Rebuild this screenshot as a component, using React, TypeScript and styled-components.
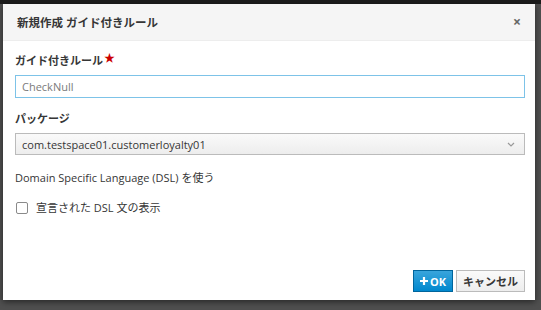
import React from 'react'
import styled, { createGlobalStyle } from 'styled-components'

const GlobalStyle = createGlobalStyle`
  html, body { margin: 0; padding: 0; }
  body {
    width: 541px;
    height: 310px;
    overflow: hidden;
    background: linear-gradient(to bottom, #1c1c1c 0, #1c1c1c 4px, #4f4f4f 4px);
    font-family: "Open Sans", "Noto Sans CJK JP", sans-serif;
  }
`

const Backdrop = styled.div`
  padding: 4px 6px 0 3px;
`

const Dialog = styled.div`
  width: 532px;
  height: 296px;
  background: #fff;
  box-shadow: 0 2px 6px rgba(0, 0, 0, 0.5);
  display: flex;
  flex-direction: column;
`

const Header = styled.div`
  height: 37px;
  box-sizing: border-box;
  background: #f5f5f5;
  border-bottom: 1px solid #ededed;
  display: flex;
  align-items: center;
  justify-content: space-between;
  padding: 0 14px 0 14px;
`

const Title = styled.h4`
  margin: 0;
  font-size: 11.5px;
  font-weight: 700;
  color: #363636;
`

const Close = styled.span`
  font-size: 14px;
  color: #666;
  font-weight: 700;
  line-height: 1;
`

const Body = styled.div`
  flex: 1;
  padding: 9px 10px 0 12px;
  display: flex;
  flex-direction: column;
`

const Label = styled.label`
  display: block;
  font-size: 11px;
  font-weight: 600;
  color: #363636;
  line-height: 16px;
  margin-bottom: 6px;
`

const Star = styled.span`
  color: #c00;
  font-size: 11px;
  margin-left: 1px;
  vertical-align: 3px;
`

const TextInput = styled.input`
  display: block;
  width: 100%;
  box-sizing: border-box;
  height: 23px;
  border: 1px solid #7dc3e8;
  padding: 0 6px;
  font-family: inherit;
  font-size: 11px;
  color: #7a7a7a;
  outline: none;
  margin-bottom: 13px;
`

const Select = styled.div`
  height: 22px;
  box-sizing: border-box;
  border: 1px solid #bbb;
  background: linear-gradient(to bottom, #fafafa, #ededed);
  display: flex;
  align-items: center;
  justify-content: space-between;
  padding: 0 9px 0 6px;
  font-size: 11px;
  color: #363636;
  margin-bottom: 15px;
`

const Plain = styled.div`
  font-size: 11px;
  color: #363636;
  line-height: 16px;
  margin-bottom: 14px;
`

const CheckRow = styled.label`
  display: flex;
  align-items: center;
  gap: 8px;
  font-size: 11px;
  line-height: 16px;
  color: #363636;
  padding-left: 1px;
`

const Box = styled.span`
  width: 10px;
  height: 10px;
  border: 1px solid #8a8a8a;
  border-radius: 2px;
  background: #fff;
`

const Footer = styled.div`
  display: flex;
  justify-content: flex-end;
  gap: 3px;
  padding: 0 10px 8px 0;
`

const Button = styled.button<{ $primary?: boolean }>`
  height: 22px;
  box-sizing: border-box;
  font-family: inherit;
  font-size: 11px;
  font-weight: 700;
  padding: 0 6px;
  display: flex;
  align-items: center;
  gap: 2px;
  border: 1px solid ${p => (p.$primary ? '#00659c' : '#bbb')};
  color: ${p => (p.$primary ? '#fff' : '#363636')};
  background: ${p =>
    p.$primary
      ? 'linear-gradient(to bottom, #39a5dc, #0088ce)'
      : 'linear-gradient(to bottom, #fafafa, #ededed)'};
`

export default function App() {
  return (
    <Backdrop>
      <GlobalStyle />
      <Dialog>
        <Header>
          <Title>新規作成 ガイド付きルール</Title>
          <Close>×</Close>
        </Header>
        <Body>
          <Label>
            ガイド付きルール<Star>★</Star>
          </Label>
          <TextInput defaultValue="CheckNull" />
          <Label>パッケージ</Label>
          <Select>
            <span>com.testspace01.customerloyalty01</span>
            <svg width="8" height="5" viewBox="0 0 8 5">
              <path d="M1 1l3 3 3-3" fill="none" stroke="#999" strokeWidth="1.2" />
            </svg>
          </Select>
          <Plain>Domain Specific Language (DSL) を使う</Plain>
          <CheckRow>
            <Box />
            宣言された DSL 文の表示
          </CheckRow>
        </Body>
        <Footer>
          <Button $primary>
            <svg width="8" height="8" viewBox="0 0 8 8">
              <path d="M4 0v8M0 4h8" stroke="#fff" strokeWidth="2.2" />
            </svg>
            OK
          </Button>
          <Button>キャンセル</Button>
        </Footer>
      </Dialog>
    </Backdrop>
  )
}
